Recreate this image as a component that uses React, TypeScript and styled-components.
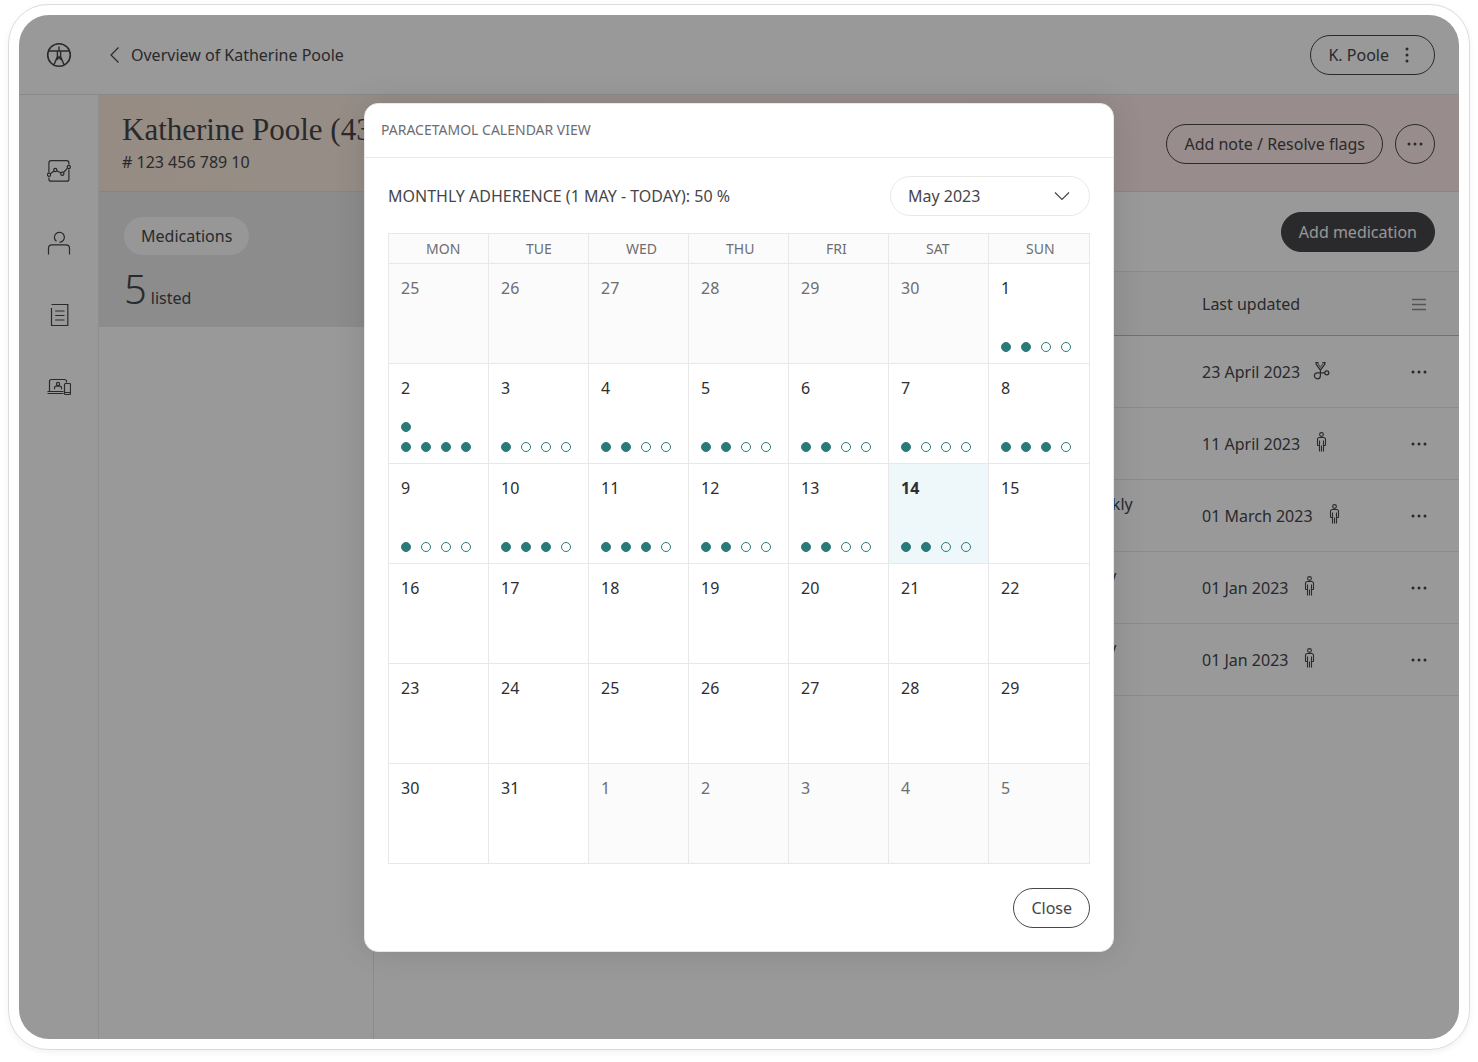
import React from "react";
import styled, { createGlobalStyle, css } from "styled-components";

const color = {
  ink: "#46464a",
  muted: "#6d6d72",
  line: "#e8e8e8",
  panel: "#e9e9e9",
  teal: "#297a79",
};

const GlobalStyle = createGlobalStyle`
  *, *::before, *::after { box-sizing: border-box; }
  body {
    margin: 0;
    background: #ffffff;
    color: ${color.ink};
    font-family: "Noto Sans", "Open Sans", sans-serif;
    font-size: 16px;
    line-height: 24px;
  }
  button, select { font: inherit; color: inherit; }
  h1, h2, p { margin: 0; font-weight: 400; }
`;

const Page = styled.div`
  display: flex;
  min-height: 100vh;
  padding: 4px 8px 12px;
`;

const Device = styled.div`
  flex: 1;
  display: flex;
  padding: 10px;
  border: 1px solid #dcdcdc;
  border-radius: 40px;
  box-shadow: 0 2px 6px rgba(0, 0, 0, 0.06);
`;

const Screen = styled.div`
  position: relative;
  flex: 1;
  display: flex;
  flex-direction: column;
  min-width: 0;
  overflow: hidden;
  border-radius: 30px;
  background: #ffffff;
`;

const TopBar = styled.header`
  display: flex;
  align-items: center;
  height: 80px;
  padding-right: 24px;
  border-bottom: 1px solid #e4e4e4;
`;

const LogoSlot = styled.a`
  display: flex;
  justify-content: center;
  width: 80px;
  color: inherit;
`;

const BackLink = styled.a`
  display: flex;
  align-items: center;
  gap: 8px;
  margin: 0 auto 0 8px;
  color: inherit;
  text-decoration: none;
`;

const PillButton = styled.button<{ $solid?: boolean; $round?: boolean }>`
  display: inline-flex;
  align-items: center;
  justify-content: center;
  gap: 8px;
  height: 40px;
  padding: 0 17px;
  border: 1px solid ${color.ink};
  border-radius: 20px;
  background: ${(p) => (p.$solid ? color.ink : "transparent")};
  color: ${(p) => (p.$solid ? "#fafafa" : color.ink)};
  white-space: nowrap;
  ${(p) =>
    p.$round &&
    css`
      width: 40px;
      padding: 0;
    `}
`;

const Body = styled.div`
  flex: 1;
  display: flex;
`;

const SideNav = styled.nav`
  display: flex;
  flex-direction: column;
  align-items: center;
  gap: 48px;
  width: 80px;
  padding-top: 64px;
  border-right: 1px solid #eeeeee;
`;

const NavLink = styled.a`
  display: flex;
  color: inherit;
`;

const Main = styled.main`
  flex: 1;
  display: flex;
  flex-direction: column;
  min-width: 0;
`;

const Banner = styled.div`
  display: flex;
  align-items: center;
  justify-content: space-between;
  height: 97px;
  padding: 2px 24px 0 23px;
  border-bottom: 1px solid rgba(70, 40, 40, 0.08);
  background: linear-gradient(80deg, #faeada 0%, #fdedea 40%, #fdebea 100%);
`;

const PatientName = styled.h1`
  margin-bottom: 4px;
  font-family: "Liberation Serif", serif;
  font-size: 31px;
  line-height: 32px;
`;

const BannerActions = styled.div`
  display: flex;
  gap: 12px;
`;

const Columns = styled.div`
  flex: 1;
  display: flex;
`;

const Categories = styled.aside`
  width: 275px;
  border-right: 1px solid ${color.line};
`;

const Category = styled.div`
  display: flex;
  flex-direction: column;
  align-items: flex-start;
  gap: 8px;
  height: 135px;
  padding: 25px;
  background: ${color.panel};
`;

const CategoryName = styled.span`
  padding: 7px 17px;
  border-radius: 20px;
  background: #fcfcfc;
`;

const Count = styled.p`
  display: flex;
  align-items: baseline;
  gap: 4px;
`;

const CountNumber = styled.span`
  font-size: 40px;
  font-weight: 300;
  line-height: 52px;
`;

const List = styled.section`
  flex: 1;
`;

const ListTools = styled.div`
  display: flex;
  align-items: center;
  justify-content: flex-end;
  height: 80px;
  padding-right: 24px;
  border-bottom: 1px solid ${color.line};
`;

const MedTable = styled.table`
  width: 100%;
  border-collapse: separate;
  border-spacing: 0;
  table-layout: fixed;
`;

const MedHead = styled.th<{ $width?: number }>`
  width: ${(p) => (p.$width ? `${p.$width}px` : "auto")};
  height: 64px;
  padding: 0;
  border-bottom: 1px solid #bcbcbc;
  background: #fbfbfb;
  font-weight: 400;
  text-align: left;
`;

const MedCell = styled.td`
  height: 72px;
  padding: 0;
  border-bottom: 1px solid ${color.line};
`;

const Updated = styled.div`
  display: flex;
  align-items: center;
  gap: 12px;

  svg { margin-bottom: 4px; }
`;

const IconButton = styled.button`
  display: flex;
  padding: 0;
  border: 0;
  background: none;
`;

const Backdrop = styled.div`
  position: absolute;
  inset: 0;
  display: flex;
  align-items: flex-start;
  justify-content: center;
  padding-top: 88px;
  background: rgba(0, 0, 0, 0.4);
`;

const Dialog = styled.section`
  width: 750px;
  border: 1px solid ${color.line};
  border-radius: 14px;
  background: #ffffff;
  box-shadow: 0 0 32px rgba(0, 0, 0, 0.12);
`;

const DialogTitle = styled.h2`
  padding: 14px 16px 15px;
  border-bottom: 1px solid ${color.line};
  color: ${color.muted};
  font-size: 14px;
`;

const DialogBody = styled.div`
  display: flex;
  flex-direction: column;
  padding: 18px 23px 23px;
`;

const Summary = styled.div`
  display: flex;
  align-items: center;
  justify-content: space-between;
  margin-bottom: 17px;
`;

const MonthPicker = styled.label`
  display: grid;
  grid-template-columns: 160px 40px;
  align-items: center;

  svg {
    grid-area: 1 / 2;
    pointer-events: none;
  }
`;

const MonthSelect = styled.select`
  grid-area: 1 / 1 / 2 / 3;
  height: 40px;
  padding: 0 17px;
  border: 1px solid ${color.line};
  border-radius: 20px;
  background: #ffffff;
  appearance: none;
`;

const Calendar = styled.table`
  width: 100%;
  margin-bottom: 24px;
  border-collapse: collapse;
  table-layout: fixed;
`;

const WeekdayCell = styled.th`
  width: 100px;
  height: 30px;
  padding: 0 0 0 37px;
  border: 1px solid ${color.line};
  background: #fbfbfb;
  color: ${color.muted};
  font-size: 14px;
  font-weight: 400;
  text-align: left;

  &:last-child { width: auto; }
`;

const DayCell = styled.td<{ $outside: boolean; $today: boolean }>`
  height: 100px;
  padding: 12px 12px 11px;
  border: 1px solid ${color.line};
  background: ${(p) => (p.$today ? "#eef8fa" : p.$outside ? "#fbfbfb" : "#ffffff")};
  color: ${(p) => (p.$outside ? color.muted : "#2e2e31")};
  font-weight: ${(p) => (p.$today ? 700 : 400)};
`;

const Day = styled.div`
  display: flex;
  flex-direction: column;
  justify-content: space-between;
  height: 76px;
`;

const Doses = styled.div`
  display: flex;
  flex-wrap: wrap-reverse;
  gap: 10px;
`;

const Dose = styled.span<{ $taken: boolean }>`
  width: 10px;
  height: 10px;
  border: 1px solid ${color.teal};
  border-radius: 50%;
  background: ${(p) => (p.$taken ? color.teal : "transparent")};
`;

const DialogActions = styled.div`
  display: flex;
  justify-content: flex-end;
`;

type IconProps = { stroke?: string; weight?: number; children: React.ReactNode };

const Icon = ({ stroke = "currentColor", weight = 1.2, children }: IconProps) => (
  <svg width="24" height="24" viewBox="0 0 24 24" fill="none" stroke={stroke} strokeWidth={weight} aria-hidden="true">
    {children}
  </svg>
);

const Logo = () => (
  <svg width="26" height="26" viewBox="0 0 26 26" fill="none" stroke="currentColor" strokeWidth="1.6" aria-hidden="true">
    <circle cx="13" cy="13" r="11.3" />
    <path d="M2.4 9H23.6M13 4.6V9M11.4 9.4V14.6L8 22.8M14.6 9.4V14.6L18 22.8M11 18L13 14.8L15 18" strokeWidth="1.4" />
  </svg>
);

const MoreIcon = ({ vertical = false, size = 24 }: { vertical?: boolean; size?: number }) => (
  <svg width={size} height={size} viewBox={`${-size / 2} ${-size / 2} ${size} ${size}`} fill="currentColor" aria-hidden="true">
    {[-6, 0, 6].map((d) => (
      <circle key={d} cx={vertical ? 0 : d} cy={vertical ? d : 0} r="1.5" />
    ))}
  </svg>
);

const ChartIcon = () => (
  <Icon>
    <path d="M1.9 13.4V3.9Q1.9 1.7 4 1.7H19.8Q21.9 1.7 21.9 3.9V5.6M21.9 10.4V20.2Q21.9 22.2 19.8 22.2H4Q1.9 22.2 1.9 20.2V18.4" />
    <path d="M3.4 14.8L7 12M9.8 11.8L13.9 14M16.5 13.5L20.6 9.2" />
    <circle cx="2" cy="15.8" r="1.6" />
    <circle cx="8.3" cy="11" r="1.6" />
    <circle cx="15.3" cy="14.7" r="1.6" />
    <circle cx="21.8" cy="8" r="1.6" />
  </Icon>
);

const PersonIcon = () => (
  <Icon>
    <path d="M9.4 10.3A5 5 0 1 1 12.5 11.3" />
    <path d="M1.5 23.5V17.2Q1.5 13.8 5 13.8H19Q22.5 13.8 22.5 17.2V23.5" />
  </Icon>
);

const NotesIcon = () => (
  <Icon>
    <path d="M4.5 5V22.5H20.8V1.5H4.5M8.2 8H17.5M8.2 12.5H17.5M8.2 17H17.5" />
  </Icon>
);

const DevicesIcon = () => (
  <Icon>
    <path d="M2.5 16.5V6.5Q2.5 4.5 4.5 4.5H17.5Q19.5 4.5 19.5 6.5V7.5M0.5 16.5H16.5M0.5 18.5H16.5" />
    <rect x="17.5" y="8.5" width="6" height="11" rx="1" />
    <path d="M17.5 17.5H23.5M7.5 14.2V13Q7.5 11.2 9.3 11.2H12.7Q14.5 11.2 14.5 13V14.2" />
    <circle cx="11" cy="9" r="1.6" />
  </Icon>
);

const StethoscopeIcon = () => (
  <svg width="20" height="20" viewBox="0 0 20 20" fill="none" stroke="currentColor" strokeWidth="1.2" aria-hidden="true">
    <path d="M6.6 2.6H4L4.2 4.2L8.4 10.2L12.8 4.2L13 2.6H10.4M8.4 10.2V15.8A3 3 0 1 1 5.4 12.8H12.8" />
    <path d="M6 3.4L8.4 7.4L11 3.4" strokeWidth="0.8" />
    <circle cx="14.8" cy="12.8" r="2" />
  </svg>
);

const PatientIcon = () => (
  <svg width="20" height="20" viewBox="0 0 20 20" fill="none" stroke="currentColor" strokeWidth="1.1" aria-hidden="true">
    <circle cx="9.5" cy="2.5" r="1.9" />
    <path d="M5.5 13.5V7.5Q5.5 5.5 7.5 5.5H11.5Q13.5 5.5 13.5 7.5V13.5M7.5 8.5V19.5M11.5 8.5V19.5M9.5 13.5V19.5M5.5 13.5H7.5M11.5 13.5H13.5" />
  </svg>
);

const meds = [
  { schedule: "", updated: "23 April 2023", by: "clinician" },
  { schedule: "", updated: "11 April 2023", by: "patient" },
  { schedule: "Once weekly", updated: "01 March 2023", by: "patient" },
  { schedule: "Once daily", updated: "01 Jan 2023", by: "patient" },
  { schedule: "Once daily", updated: "01 Jan 2023", by: "patient" },
];

const weekdays = ["MON", "TUE", "WED", "THU", "FRI", "SAT", "SUN"];

const dosesPerDay = 4;

// Doses taken on each day of the month, up to and including today.
const taken = [2, 5, 1, 2, 2, 2, 1, 3, 1, 3, 3, 2, 2, 2];
const today = 14;

const leading = [25, 26, 27, 28, 29, 30];
const month = Array.from({ length: 31 }, (_, i) => i + 1);
const trailing = [1, 2, 3, 4, 5];

const days = [
  ...leading.map((date) => ({ date, outside: true })),
  ...month.map((date) => ({ date, outside: false })),
  ...trailing.map((date) => ({ date, outside: true })),
];

const weeks = Array.from({ length: days.length / 7 }, (_, i) => days.slice(i * 7, i * 7 + 7));

function CalendarDay({ date, outside }: { date: number; outside: boolean }) {
  const count = outside ? undefined : taken[date - 1];
  return (
    <DayCell $outside={outside} $today={!outside && date === today}>
      <Day>
        <span>{date}</span>
        {count !== undefined && (
          <Doses>
            {Array.from({ length: Math.max(dosesPerDay, count) }, (_, i) => (
              <Dose key={i} $taken={i < count} />
            ))}
          </Doses>
        )}
      </Day>
    </DayCell>
  );
}

export default function App() {
  return (
    <Page>
      <GlobalStyle />
      <Device>
        <Screen>
          <TopBar>
            <LogoSlot href="#home" aria-label="Home">
              <Logo />
            </LogoSlot>
            <BackLink href="#overview">
              <svg width="16" height="20" viewBox="0 0 16 20" fill="none" stroke="currentColor" strokeWidth="1.2" aria-hidden="true">
                <path d="M11.5 2.5L4 10L11.5 17.5" />
              </svg>
              Overview of Katherine Poole
            </BackLink>
            <PillButton>
              K. Poole
              <MoreIcon vertical size={20} />
            </PillButton>
          </TopBar>
          <Body>
            <SideNav>
              <NavLink href="#trends" aria-label="Trends"><ChartIcon /></NavLink>
              <NavLink href="#profile" aria-label="Profile"><PersonIcon /></NavLink>
              <NavLink href="#notes" aria-label="Notes"><NotesIcon /></NavLink>
              <NavLink href="#devices" aria-label="Devices"><DevicesIcon /></NavLink>
            </SideNav>
            <Main>
              <Banner>
                <div>
                  <PatientName>Katherine Poole (43)</PatientName>
                  <p># 123 456 789 10</p>
                </div>
                <BannerActions>
                  <PillButton>Add note / Resolve flags</PillButton>
                  <PillButton $round aria-label="More actions"><MoreIcon /></PillButton>
                </BannerActions>
              </Banner>
              <Columns>
                <Categories>
                  <Category>
                    <CategoryName>Medications</CategoryName>
                    <Count>
                      <CountNumber>5</CountNumber>
                      listed
                    </Count>
                  </Category>
                </Categories>
                <List>
                  <ListTools>
                    <PillButton $solid>Add medication</PillButton>
                  </ListTools>
                  <MedTable>
                    <thead>
                      <tr>
                        <MedHead />
                        <MedHead $width={164} />
                        <MedHead $width={205}>Last updated</MedHead>
                        <MedHead $width={52}>
                          <IconButton aria-label="Columns">
                            <Icon stroke="#8c8c90" weight={1.6}><path d="M5 7.5H19M5 12.5H19M5 17.5H19" /></Icon>
                          </IconButton>
                        </MedHead>
                      </tr>
                    </thead>
                    <tbody>
                      {meds.map((med, i) => (
                        <tr key={i}>
                          <MedCell />
                          <MedCell>
                            {med.schedule}
                            <br />
                            &nbsp;
                          </MedCell>
                          <MedCell>
                            <Updated>
                              {med.updated}
                              {med.by === "clinician" ? <StethoscopeIcon /> : <PatientIcon />}
                            </Updated>
                          </MedCell>
                          <MedCell>
                            <IconButton aria-label="More"><MoreIcon /></IconButton>
                          </MedCell>
                        </tr>
                      ))}
                    </tbody>
                  </MedTable>
                </List>
              </Columns>
            </Main>
          </Body>
          <Backdrop>
            <Dialog role="dialog" aria-labelledby="dialog-title">
              <DialogTitle id="dialog-title">PARACETAMOL CALENDAR VIEW</DialogTitle>
              <DialogBody>
                <Summary>
                  <p>MONTHLY ADHERENCE (1 MAY - TODAY): 50 %</p>
                  <MonthPicker>
                    <MonthSelect aria-label="Month" defaultValue="May 2023">
                      <option>May 2023</option>
                    </MonthSelect>
                    <Icon><path d="M5 8.5L12 15.5L19 8.5" /></Icon>
                  </MonthPicker>
                </Summary>
                <Calendar>
                  <thead>
                    <tr>
                      {weekdays.map((name) => (
                        <WeekdayCell key={name}>{name}</WeekdayCell>
                      ))}
                    </tr>
                  </thead>
                  <tbody>
                    {weeks.map((week, i) => (
                      <tr key={i}>
                        {week.map((day) => (
                          <CalendarDay key={day.date} date={day.date} outside={day.outside} />
                        ))}
                      </tr>
                    ))}
                  </tbody>
                </Calendar>
                <DialogActions>
                  <PillButton>Close</PillButton>
                </DialogActions>
              </DialogBody>
            </Dialog>
          </Backdrop>
        </Screen>
      </Device>
    </Page>
  );
}
